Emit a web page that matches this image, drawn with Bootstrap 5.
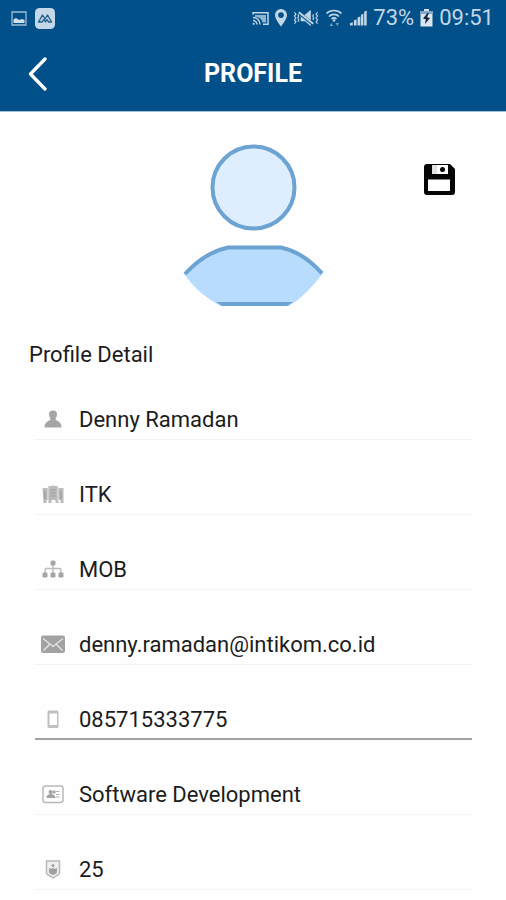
<!DOCTYPE html>
<html lang="en">
<head>
<meta charset="utf-8">
<meta name="viewport" content="width=device-width, initial-scale=1">
<title>Profile</title>
<link href="https://cdn.jsdelivr.net/npm/bootstrap@5.3.0/dist/css/bootstrap.min.css" rel="stylesheet">
<style>
  body { font-family: Roboto, "Liberation Sans", sans-serif; background: #fefefe; color: #1c1c1c; }
  svg { display: block; flex: none; }
  .app-top { background: #015089; border-bottom: 1px solid #a9c2d8; }
  .status { height: 36px; padding: 0 12px 0 11px; color: #c3d6e6; font-size: 22px; line-height: 36px; }
  .status-right { gap: 6px; }
  .title-bar { display: grid; grid-template-columns: 76px 1fr 76px; height: 75px; }
  .title-bar h1 { font-size: 25px; line-height: 28px; }
  .photo-area { display: grid; grid-template-columns: 1fr 140px 1fr; padding: 31px 50px 0; }
  .photo { grid-column: 2; }
  .save { margin-top: 20px; }
  .section-title { font-size: 22px; line-height: 24px; padding: 0 29px; margin: 35px 0 33px; }
  .fields { padding: 0 34px 10px 35px; gap: 35px; }
  .field-row { height: 40px; padding-left: 6px; gap: 14px; border-bottom: 1px solid #f3f3f3; color: #a5a5a5; }
  .field-row:focus-within, .field-row.editable { border-color: #a3a3a3; box-shadow: inset 0 -1px #a3a3a3; }
  .field-row input { font-size: 22px; line-height: 24px; color: #1c1c1c; outline: 0; min-width: 0; }
</style>
</head>
<body>
<header class="app-top text-white">
  <div class="status d-flex align-items-center justify-content-between">
    <div class="d-flex align-items-center gap-2">
      <svg width="16" height="15" viewBox="0 0 16 15"><path d="M1 1h14v13H1z" fill="none" stroke="#9dbbd3" stroke-width="1.3"/><path d="M2.500 12V8.500L5 7l3 2 3-1 2.500 1v3z" fill="#d3e1ed"/></svg>
      <svg width="20" height="21" viewBox="0 0 20 21"><rect width="20" height="21" rx="4.500" fill="#c5d8e8"/><path d="M3.500 14L7.500 7l2.500 4L12.500 7l4 7h-3l-1.500-2.500L10.500 14 9 11.500 7 14z" fill="none" stroke="#25618f" stroke-width="1.400" stroke-linejoin="round"/></svg>
    </div>
    <div class="status-right d-flex align-items-center">
      <svg width="17" height="15" viewBox="0 0 17 15"><path d="M1 3.500V1.700h15v11.600h-5" fill="none" stroke="currentColor" stroke-width="1.500"/><path d="M3 4h11v7.500h-3.500C9.500 7.500 7 6 3 6z" fill="currentColor" opacity=".75"/><path d="M1 6.500c4 0 7 3 7 7M1 9.500c2.300 0 4 1.700 4 4" fill="none" stroke="currentColor" stroke-width="1.400"/><circle cx="1.700" cy="12.800" r="1.100" fill="currentColor"/></svg>
      <svg width="12" height="18" viewBox="0 0 12 18"><path fill="currentColor" fill-rule="evenodd" d="M6 0a6 6 0 0 0-6 6c0 4 6 11.500 6 11.500S12 10 12 6a6 6 0 0 0-6-6zm0 3.200a2.900 2.900 0 1 1 0 5.800 2.900 2.900 0 0 1 0-5.800z"/></svg>
      <svg width="26" height="18" viewBox="0 0 27 18"><path d="M8 5.500h4.500l6-5v17l-6-5H8z" fill="currentColor"/><path d="M6 3.500l15 12" stroke="#015089" stroke-width="3.500"/><path d="M6 3l15 12" stroke="currentColor" stroke-width="2"/><path d="M1.500 3l1.500 2-1.500 2L3 9l-1.500 2L3 13l-1.500 2M5 5l1 2-1 2 1 2-1 2M25.500 3L24 5l1.500 2L24 9l1.500 2-1.500 2 1.500 2M21.500 5l-1 2 1 2-1 2" fill="none" stroke="currentColor" stroke-width="1.200"/></svg>
      <svg width="18" height="18" viewBox="0 0 18 18"><path d="M1.500 4.500C5.500.5 12.500.5 16.500 4.500M4 7.500c2.800-2.800 7.200-2.800 10 0M6.500 10c1.400-1.400 3.600-1.400 5 0" fill="none" stroke="currentColor" stroke-width="1.700"/><circle cx="9" cy="11.500" r="1.300" fill="currentColor"/><path d="M4.500 17l2-3 1.500 3zM10.500 14H14l-1.800 3z" fill="currentColor" opacity=".6"/></svg>
      <svg width="18" height="18" viewBox="0 0 19 18"><path d="M1 17v-2.500l3-1V17zM5.200 17v-5.500l2.800-1V17zM9 17V8.500l3-1.200V17zM12.700 17V5.500l2.500-1V17zM16 17V2.500L18.700 1v16z" fill="currentColor"/></svg>
      <span>73%</span>
      <svg width="13" height="18" viewBox="0 0 13 18"><path d="M4 0h5v2h3.500v15.500H.5V2H4z" fill="#d9e5ef"/><path d="M.5 2h12v3H.5z" fill="#83a9c6"/><path d="M7.500 4L3 9.500l2.800.8L5 15l5-6-3-.8L9 4z" fill="#12283a"/></svg>
      <span>09:51</span>
    </div>
  </div>
  <div class="title-bar align-items-center">
    <button type="button" class="btn border-0 p-0 h-100 d-flex align-items-center justify-content-center" aria-label="Back">
      <svg width="20" height="34" viewBox="0 0 20 34"><path d="M17 2L2.500 17 17 32" fill="none" stroke="#fff" stroke-width="3.300" stroke-linecap="round" stroke-linejoin="round"/></svg>
    </button>
    <h1 class="fw-bold text-center m-0">PROFILE</h1>
  </div>
</header>
<main>
  <div class="photo-area">
    <svg class="photo" width="140" height="165" viewBox="0 0 140 165" role="img" aria-label="Profile photo">
      <circle cx="70.500" cy="44.500" r="41" fill="#dfeefe" stroke="#6ca3d2" stroke-width="4"/>
      <path d="M1 131C13 118 27 107 45 103h53c18 4 31 14 42 27-10 13-20 24-34 33H38C24 156 11 145 1 131z" fill="#b8dcfe"/>
      <path d="M2 131C14 118 28 108 45 104.500h53c17 3.500 30 13.500 41 26" fill="none" stroke="#6ca3d2" stroke-width="4"/>
      <path d="M33 159h77l-6 4H39z" fill="#6ca3d2"/>
    </svg>
    <button type="button" class="save btn border-0 p-0 align-self-start ms-auto" aria-label="Save">
      <svg width="34" height="34" viewBox="0 0 34 34"><path d="M5 1h23l5 5v23a3 3 0 0 1-3 3H5a3 3 0 0 1-3-3V4a3 3 0 0 1 3-3z" fill="#050505"/><path d="M10 2h16v9H10zM6 16.500h22V28H6z" fill="#fff"/><path d="M10 2h5v9h-5z" fill="#e2e2e2"/><circle cx="20.500" cy="6.500" r="2.500" fill="#050505"/></svg>
    </button>
  </div>
  <h2 class="section-title fw-normal">Profile Detail</h2>
  <form class="fields d-flex flex-column">
    <div class="field-row d-flex align-items-center">
      <label for="name" aria-label="Name"><svg width="24" height="24" viewBox="0 0 24 24" fill="currentColor"><circle cx="12" cy="6.500" r="4"/><path d="M3.500 19.500c0-4 2-6 6-7.500L9 10h6l-.5 2c4 1.500 6 3.500 6 7.500z"/></svg></label>
      <input id="name" type="text" class="border-0 bg-transparent p-0 flex-grow-1" value="Denny Ramadan">
    </div>
    <div class="field-row d-flex align-items-center">
      <label for="company" aria-label="Company"><svg width="24" height="24" viewBox="0 0 24 24"><path d="M1.500 5H7V3.500l5-1 5 1V5h5.500v15h-3v-3h-2v3h-3v-3h-4v3h-3v-3h-2v3h-3z" fill="#bbb"/><path d="M7 4v14M17 4v14" stroke="#e6e6e6"/><path d="M9.500 7h5M9.500 10h5M9.500 13h5M4 8v8M20 8v8" stroke="#999" stroke-width="1.200"/></svg></label>
      <input id="company" type="text" class="border-0 bg-transparent p-0 flex-grow-1" value="ITK">
    </div>
    <div class="field-row d-flex align-items-center">
      <label for="unit" aria-label="Unit"><svg width="24" height="24" viewBox="0 0 24 24" fill="currentColor"><path d="M4 16v-4q0-1.500 1.500-1.500h13Q20 10.500 20 12v4M12 6v10" fill="none" stroke="#bcbcbc" stroke-width="1.400"/><rect x="9.500" y="2.500" width="5" height="5" rx="1.500"/><rect x="1.500" y="14.500" width="5" height="5" rx="1.200"/><rect x="9.500" y="14.500" width="5" height="5" rx="1.200"/><rect x="17.500" y="14.500" width="5" height="5" rx="1.200"/></svg></label>
      <input id="unit" type="text" class="border-0 bg-transparent p-0 flex-grow-1" value="MOB">
    </div>
    <div class="field-row d-flex align-items-center">
      <label for="email" aria-label="Email"><svg width="24" height="24" viewBox="0 0 24 24"><rect y="2.500" width="24" height="17.500" rx="2" fill="#a2a2a2"/><path d="M2 5.500l10 8 10-8M2.500 17.500l6-6M21.500 17.500l-6-6" fill="none" stroke="#e6e6e6" stroke-width="1.300"/></svg></label>
      <input id="email" type="email" class="border-0 bg-transparent p-0 flex-grow-1" value="denny.ramadan@intikom.co.id">
    </div>
    <div class="field-row editable d-flex align-items-center">
      <label for="phone" aria-label="Phone"><svg width="24" height="24" viewBox="0 0 24 24"><rect x="6.500" y="2.500" width="11" height="17.500" rx="1.500" fill="#c0c0c0"/><path d="M8.500 5.500h7.500v11.500H8.500z" fill="#fff"/></svg></label>
      <input id="phone" type="tel" class="border-0 bg-transparent p-0 flex-grow-1" value="085715333775">
    </div>
    <div class="field-row d-flex align-items-center">
      <label for="division" aria-label="Division"><svg width="24" height="24" viewBox="0 0 24 24"><rect x="2" y="3" width="20" height="16.500" rx="2.500" fill="none" stroke="#b9b9b9" stroke-width="1.500"/><g fill="#a3a3a3"><circle cx="9.500" cy="9" r="2"/><circle cx="13" cy="9" r="1.700"/><path d="M5.500 15c0-2.500 1.500-4 4-4s5 1.500 5 4z"/></g><path d="M15 8.500h3.500M15 11.500h3.500M15 14h3.500" stroke="#b4b4b4" stroke-width="1.200"/></svg></label>
      <input id="division" type="text" class="border-0 bg-transparent p-0 flex-grow-1" value="Software Development">
    </div>
    <div class="field-row d-flex align-items-center">
      <label for="level" aria-label="Level"><svg width="24" height="24" viewBox="0 0 24 24"><path d="M5.500 3h13v12c0 2-4 3-6.500 5-2.500-2-6.500-3-6.500-5z" fill="#efefef" stroke="#b9b9b9" stroke-width="1.500"/><g fill="#a0a0a0"><circle cx="12" cy="7.500" r="1.500"/><path d="M8 10l2.500 1L12 9.500l1.500 1.500 2.500-1v4c0 1.500-2 2.200-4 3-2-.8-4-1.500-4-3z"/></g></svg></label>
      <input id="level" type="text" class="border-0 bg-transparent p-0 flex-grow-1" value="25">
    </div>
  </form>
</main>
<script src="https://cdn.jsdelivr.net/npm/bootstrap@5.3.0/dist/js/bootstrap.bundle.min.js"></script>
</body>
</html>
